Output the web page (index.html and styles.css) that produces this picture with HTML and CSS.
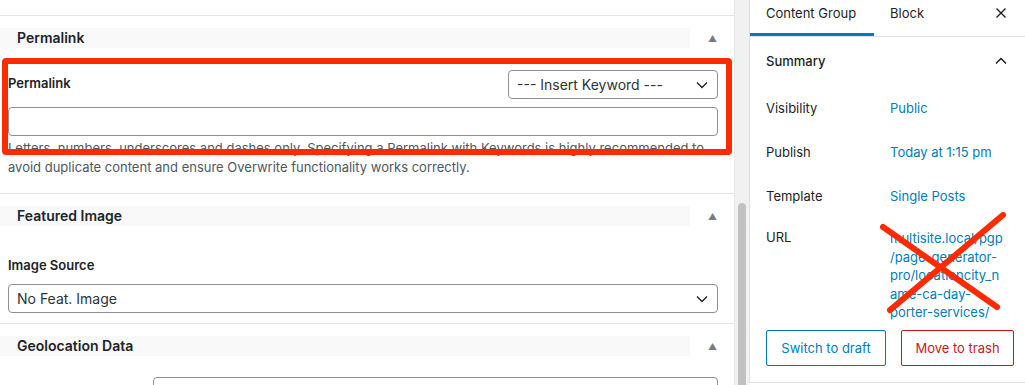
FILE: index.html
```html
<!DOCTYPE html>
<html lang="en">
<head>
  <meta charset="UTF-8" />
  <title>Content Group Editor</title>
  <link rel="stylesheet" href="styles.css">
</head>
<body>
  <div class="app">
    <div class="main">
      <div class="postbox">
        <div class="postbox-header">
          <h2>Permalink</h2>
          <span class="toggle">&#9650;</span>
        </div>
        <div class="postbox-body permalink-body">
          <div class="field-head">
            <label>Permalink</label>
            <div class="select small">
              <span>--- Insert Keyword ---</span>
              <svg width="12" height="8" viewBox="0 0 12 8"><path d="M1 1.5l5 5 5-5" fill="none" stroke="#1e1e1e" stroke-width="1.3"/></svg>
            </div>
          </div>
          <div class="text-input"></div>
          <p class="help">Letters, numbers, underscores and dashes only. Specifying a Permalink with Keywords is highly recommended to avoid duplicate content and ensure Overwrite functionality works correctly.</p>
          <div class="highlight"></div>
        </div>
      </div>

      <div class="postbox">
        <div class="postbox-header">
          <h2>Featured Image</h2>
          <span class="toggle">&#9650;</span>
        </div>
        <div class="postbox-body image-body">
          <label>Image Source</label>
          <div class="select">
            <span>No Feat. Image</span>
            <svg width="12" height="8" viewBox="0 0 12 8"><path d="M1 1.5l5 5 5-5" fill="none" stroke="#1e1e1e" stroke-width="1.3"/></svg>
          </div>
        </div>
      </div>

      <div class="postbox">
        <div class="postbox-header">
          <h2>Geolocation Data</h2>
          <span class="toggle">&#9650;</span>
        </div>
        <div class="postbox-body geo-body">
          <div class="text-input"></div>
        </div>
      </div>
    </div>

    <div class="scrollbar"><div class="thumb"></div></div>

    <div class="sidebar">
      <div class="tabs">
        <div class="tab active">Content Group</div>
        <div class="tab">Block</div>
        <svg class="close" width="12" height="12" viewBox="0 0 12 12"><path d="M1.5 1.5l9 9M10.5 1.5l-9 9" stroke="#1e1e1e" stroke-width="1.4"/></svg>
      </div>
      <div class="panel">
        <div class="panel-title">
          <span>Summary</span>
          <svg width="12" height="8" viewBox="0 0 12 8"><path d="M1 6.5l5-5 5 5" fill="none" stroke="#1e1e1e" stroke-width="1.5"/></svg>
        </div>
        <div class="row"><span class="key">Visibility</span><a class="val">Public</a></div>
        <div class="row"><span class="key">Publish</span><a class="val">Today at 1:15 pm</a></div>
        <div class="row"><span class="key">Template</span><a class="val">Single Posts</a></div>
        <div class="row url-row">
          <span class="key">URL</span>
          <a class="val url">multisite.local/pgp<br>/page-generator-<br>pro/locationcity_n<br>ame-ca-day-<br>porter-services/</a>
          <svg class="cross" width="130" height="105" viewBox="0 0 130 105"><path d="M4 15L118 95M124 3L11 98" stroke="#ff2a00" stroke-width="6" stroke-linecap="round"/></svg>
        </div>
        <div class="actions">
          <button class="btn draft">Switch to draft</button>
          <button class="btn trash">Move to trash</button>
        </div>
      </div>
    </div>
  </div>
</body>
</html>
```

FILE: styles.css
```css
* {
  box-sizing: border-box;
  margin: 0;
  padding: 0;
}

body {
  font-family: Inter, "Noto Sans", sans-serif;
  font-size: 13px;
  color: #1e1e1e;
  background: #fff;
  overflow: hidden;
}

.app {
  display: flex;
  height: 385px;
}

.main {
  flex: none;
  width: 734px;
  padding-top: 15px;
  overflow: hidden;
}

.postbox {
  border-top: 1px solid #e2e4e7;
}

.postbox-header {
  display: flex;
  align-items: center;
  margin-top: 12px;
  height: 20px;
}

.postbox-header h2 {
  width: 690px;
  height: 20px;
  line-height: 20px;
  background: #f9f9f9;
  padding-left: 17px;
  font-size: 14px;
  font-weight: 600;
  color: #1d2327;
}

.toggle {
  margin-left: 18px;
  font-size: 9px;
  color: #787c82;
}

.postbox-body {
  position: relative;
  padding: 0 16px 0 8px;
}

.permalink-body {
  padding-top: 22px;
  padding-bottom: 16px;
}

.field-head {
  display: flex;
  justify-content: space-between;
  align-items: center;
  margin-bottom: 8px;
}

label {
  font-weight: 600;
  color: #1d2327;
  line-height: 16px;
}

.field-head label {
  margin-top: -3px;
}

.select {
  display: flex;
  align-items: center;
  justify-content: space-between;
  height: 29px;
  padding: 0 9px 0 8px;
  border: 1px solid #8c8f94;
  border-radius: 4px;
  font-size: 14px;
  color: #2c3338;
}

.select.small {
  width: 210px;
}

.text-input {
  height: 29px;
  border: 1px solid #8c8f94;
  border-radius: 4px;
}

.help {
  margin-top: 3px;
  line-height: 19px;
  color: #50575e;
}

.highlight {
  position: absolute;
  left: 2px;
  top: 10px;
  width: 730px;
  height: 97px;
  border: 6px solid #ff2a00;
  border-radius: 4px;
}

.image-body {
  padding-top: 31px;
  padding-bottom: 10px;
}

.image-body label {
  display: block;
  margin-bottom: 11px;
}

.geo-body {
  padding-top: 21px;
  padding-left: 153px;
}

.scrollbar {
  flex: none;
  width: 15px;
  background: #f1f1f1;
  border-left: 1px solid #e8e8e8;
  padding: 203px 3px 0 3px;
}

.thumb {
  height: 200px;
  background: #c1c1c1;
  border-radius: 4px;
}

.sidebar {
  flex: 1;
  min-width: 0;
  border-left: 1px solid #e0e0e0;
  height: 383px;
  border-bottom: 1px solid #e0e0e0;
}

.tabs {
  display: flex;
  align-items: center;
  height: 37px;
  border-bottom: 1px solid #e0e0e0;
}

.tab {
  height: 36px;
  line-height: 26px;
  padding: 0 16px;
}

.tab.active {
  width: 124px;
  border-bottom: 3px solid #007cba;
}

.close {
  margin-left: auto;
  margin-right: 18px;
  margin-bottom: 10px;
}

.panel {
  padding: 0 16px;
}

.panel-title {
  display: flex;
  justify-content: space-between;
  align-items: center;
  height: 48px;
  margin-bottom: 12px;
  font-weight: 500;
  padding-right: 2px;
}

.row {
  display: flex;
  height: 44px;
  padding-top: 3px;
  position: relative;
}

.key {
  width: 124px;
}

.val {
  color: #007cba;
}

.url-row {
  height: auto;
  padding-top: 0;
}

.url {
  line-height: 18.5px;
}

.cross {
  position: absolute;
  left: 113px;
  top: -17px;
}

.actions {
  display: flex;
  gap: 15px;
  margin-top: 8px;
}

.btn {
  flex: none;
  height: 36px;
  padding: 0 6px;
  background: #fff;
  font-family: inherit;
  font-size: 13px;
  white-space: nowrap;
  border-radius: 2px;
}

.draft {
  width: 120px;
  border: 1px solid #007cba;
  color: #007cba;
}

.trash {
  width: 113px;
  border: 1px solid #cc1818;
  color: #cc1818;
}
```
